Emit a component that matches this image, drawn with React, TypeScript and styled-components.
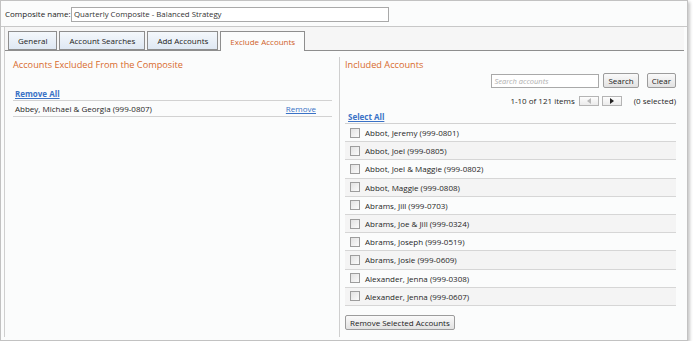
import React from 'react';
import styled, { createGlobalStyle } from 'styled-components';

const GlobalStyle = createGlobalStyle`
  html, body { margin: 0; padding: 0; background: #ffffff; }
  body { font-family: "Open Sans", "Liberation Sans", sans-serif; color: #1f1f1f; }
  * { box-sizing: border-box; }
`;

const included = [
  'Abbot, Jeremy (999-0801)',
  'Abbot, Joel (999-0805)',
  'Abbot, Joel & Maggie (999-0802)',
  'Abbot, Maggie (999-0808)',
  'Abrams, Jill (999-0703)',
  'Abrams, Joe & Jill (999-0324)',
  'Abrams, Joseph (999-0519)',
  'Abrams, Josie (999-0609)',
  'Alexander, Jenna (999-0308)',
  'Alexander, Jenna (999-0607)',
];

const tabs = ['General', 'Account Searches', 'Add Accounts', 'Exclude Accounts'];

const App = () => {
  return <>
    <GlobalStyle />
    <Frame>
      <Header>
        <Label>Composite name:</Label>
        <NameInput defaultValue="Quarterly Composite - Balanced Strategy" />
      </Header>
      <Body>
        <TabStrip>
          {tabs.map((t) => <Tab key={t} $active={t === 'Exclude Accounts'}>{t}</Tab>)}
        </TabStrip>
        <Columns>
          <LeftColumn>
            <Title>Accounts Excluded From the Composite</Title>
            <ListHead $top={14}><Link>Remove All</Link></ListHead>
            <ExcludedRow>
              <span>Abbey, Michael &amp; Georgia (999-0807)</span>
              <SmallLink>Remove</SmallLink>
            </ExcludedRow>
          </LeftColumn>
          <RightColumn>
            <Title>Included Accounts</Title>
            <SearchBar>
              <SearchInput placeholder="Search accounts" />
              <Button>Search</Button>
              <Button $gap={8}>Clear</Button>
            </SearchBar>
            <Pager>
              <span>1-10 of 121 items</span>
              <PageButtons>
                <PageButton>
                  <svg width="4" height="6" viewBox="0 0 4 6"><path d="M4 0 L0 3 L4 6 Z" fill="#b8b8b8" /></svg>
                </PageButton>
                <PageButton>
                  <svg width="4" height="6" viewBox="0 0 4 6"><path d="M0 0 L4 3 L0 6 Z" fill="#222" /></svg>
                </PageButton>
              </PageButtons>
              <Selected>(0 selected)</Selected>
            </Pager>
            <ListHead $top={2} $indent={3}><Link>Select All</Link></ListHead>
            {included.map((name, i) => (
              <AccountRow key={name} $odd={i % 2 === 1}>
                <Check />
                <span>{name}</span>
              </AccountRow>
            ))}
            <Button $wide>Remove Selected Accounts</Button>
          </RightColumn>
        </Columns>
      </Body>
    </Frame>
  </>;
};

const Frame = styled.div`
  width: 688px;
  height: 341px;
  border: 1px solid #c2c2c2;
  background: #fbfcfc;
  box-shadow: 2px 2px 3px rgba(0, 0, 0, 0.22);
  display: flex;
  flex-direction: column;
  font-size: 8px;
`;

const Header = styled.div`
  height: 26px;
  display: flex;
  align-items: center;
  padding: 0 0 0 4px;
  border-bottom: 1px solid #c8c8c8;
`;

const Label = styled.span`
  width: 66px;
  flex-shrink: 0;
  white-space: nowrap;
  color: #1a1a1a;
`;

const NameInput = styled.input`
  width: 318px;
  height: 15px;
  margin-top: 1px;
  border: 1px solid #a9a9a9;
  background: #fff;
  padding: 0 2px;
  font-family: inherit;
  font-size: 7.8px;
  color: #333;
  outline: none;
`;

const Body = styled.div`
  flex: 1;
  margin: 0 3px 3px 3px;
  border-left: 1px solid #cfcfcf;
  display: flex;
  flex-direction: column;
`;

const TabStrip = styled.div`
  height: 24px;
  background: #f6f6f6;
  border-bottom: 1px solid #8e8e8e;
  display: flex;
  align-items: flex-end;
  gap: 2px;
  padding-left: 3px;
`;

const Tab = styled.div<{ $active?: boolean }>`
  height: ${(p) => (p.$active ? '20px' : '19px')};
  margin-bottom: ${(p) => (p.$active ? '-1px' : '0')};
  padding: 0 9px;
  display: flex;
  align-items: center;
  border: 1px solid #8e8e8e;
  border-bottom: ${(p) => (p.$active ? 'none' : '1px solid #8e8e8e')};
  background: ${(p) => (p.$active ? '#fbfcfc' : 'linear-gradient(#f4f8fc, #dfe8f3)')};
  color: ${(p) => (p.$active ? '#d0622a' : '#1a1a1a')};
`;

const Columns = styled.div`
  flex: 1;
  display: flex;
`;

const LeftColumn = styled.div`
  width: 334px;
  padding: 7px 7px 0 8px;
  display: flex;
  flex-direction: column;
`;

const RightColumn = styled.div`
  flex: 1;
  margin-top: 6px;
  border-left: 1px solid #cfcfcf;
  padding: 1px 8px 0 5px;
  display: flex;
  flex-direction: column;
`;

const Title = styled.div`
  height: 14px;
  line-height: 14px;
  font-size: 9.2px;
  color: #d86a2c;
`;

const ListHead = styled.div<{ $indent?: number; $top: number }>`
  height: 15px;
  display: flex;
  align-items: center;
  padding-left: ${(p) => p.$indent ?? 2}px;
  border-bottom: 1px solid #d2d2d2;
  margin-top: ${(p) => p.$top}px;
`;

const Link = styled.a`
  font-weight: bold;
  color: #3a72c6;
  text-decoration: underline;
  cursor: pointer;
`;

const SmallLink = styled.a`
  color: #3a72c6;
  text-decoration: underline;
  cursor: pointer;
  margin-right: 16px;
`;

const ExcludedRow = styled.div`
  height: 16px;
  display: flex;
  align-items: center;
  justify-content: space-between;
  padding-left: 2px;
  border-bottom: 1px solid #d2d2d2;
`;

const SearchBar = styled.div`
  display: flex;
  justify-content: flex-end;
  align-items: center;
  height: 15px;
  margin-top: 1px;
`;

const SearchInput = styled.input`
  width: 108px;
  height: 14px;
  border: 1px solid #a9a9a9;
  background: #fff;
  padding: 0 2px;
  font-family: inherit;
  font-size: 7.5px;
  outline: none;
  &::placeholder { color: #b0b0b0; font-style: italic; }
`;

const Button = styled.button<{ $gap?: number; $wide?: boolean }>`
  height: 15px;
  margin-left: ${(p) => (p.$wide ? 0 : p.$gap ?? 4)}px;
  margin-top: ${(p) => (p.$wide ? '9px' : '0')};
  align-self: ${(p) => (p.$wide ? 'flex-start' : 'auto')};
  padding: 0 4px;
  border: 1px solid #9c9c9c;
  border-radius: 2px;
  background: linear-gradient(#fafafa, #e2e2e2);
  font-family: inherit;
  font-size: 8px;
  color: #1a1a1a;
  line-height: 13px;
`;

const Pager = styled.div`
  display: flex;
  justify-content: flex-end;
  align-items: center;
  height: 13px;
  margin-top: 6px;
`;

const PageButtons = styled.div`
  display: flex;
  gap: 3px;
  margin-left: 4px;
`;

const PageButton = styled.div`
  width: 20px;
  height: 10px;
  border: 1px solid #b4b4b4;
  background: linear-gradient(#fdfdfd, #ebebeb);
  display: flex;
  align-items: center;
  justify-content: center;
`;

const Selected = styled.span`
  margin-left: 12px;
`;

const AccountRow = styled.div<{ $odd: boolean }>`
  height: 18.2px;
  display: flex;
  align-items: center;
  gap: 5px;
  padding-left: 5px;
  border-bottom: 1px solid #d6d6d6;
  background: ${(p) => (p.$odd ? '#f4f4f4' : '#fbfcfc')};
`;

const Check = styled.span`
  width: 10px;
  height: 10px;
  border: 1px solid #9d9d9d;
  background: linear-gradient(135deg, #e2e2e2, #fbfbfb);
`;

export default App;
